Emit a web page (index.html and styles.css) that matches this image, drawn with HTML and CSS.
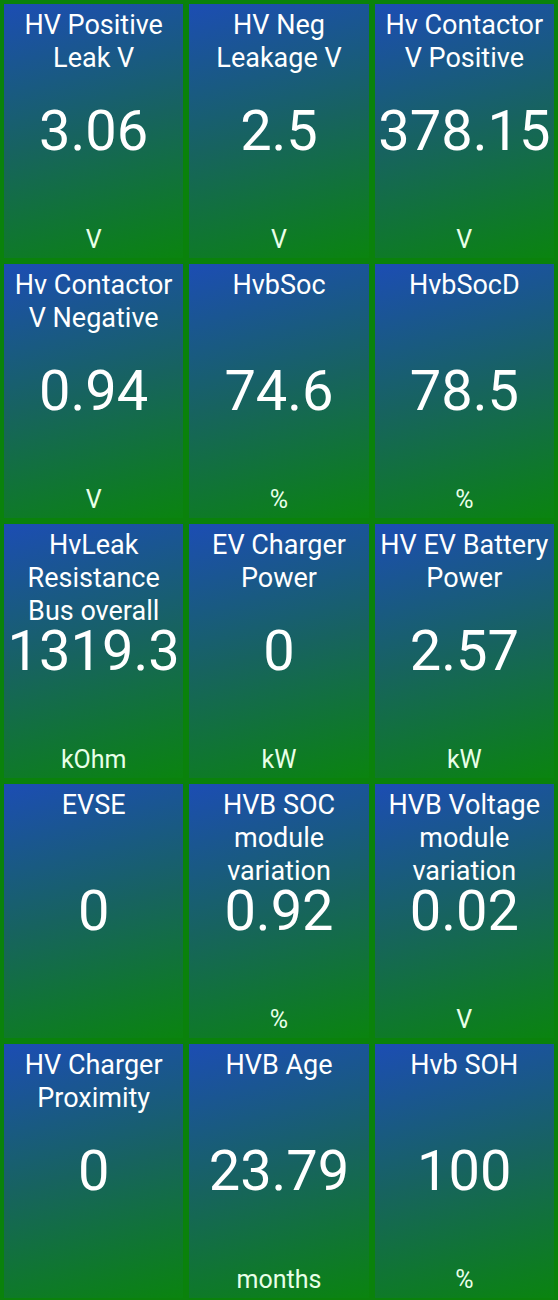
FILE: index.html
```html
<!DOCTYPE html>
<html>
<head>
<meta charset="utf-8">
<link rel="stylesheet" href="styles.css">
</head>
<body>
<div class="grid">
  <div class="tile"><div class="title">HV Positive Leak V</div><div class="value">3.06</div><div class="unit">V</div></div>
  <div class="tile"><div class="title">HV Neg Leakage V</div><div class="value">2.5</div><div class="unit">V</div></div>
  <div class="tile"><div class="title">Hv Contactor V Positive</div><div class="value">378.15</div><div class="unit">V</div></div>
  <div class="tile"><div class="title">Hv Contactor V Negative</div><div class="value">0.94</div><div class="unit">V</div></div>
  <div class="tile"><div class="title">HvbSoc</div><div class="value">74.6</div><div class="unit">%</div></div>
  <div class="tile"><div class="title">HvbSocD</div><div class="value">78.5</div><div class="unit">%</div></div>
  <div class="tile"><div class="title">HvLeak Resistance Bus overall</div><div class="value">1319.3</div><div class="unit">kOhm</div></div>
  <div class="tile"><div class="title">EV Charger Power</div><div class="value">0</div><div class="unit">kW</div></div>
  <div class="tile"><div class="title">HV EV Battery Power</div><div class="value">2.57</div><div class="unit">kW</div></div>
  <div class="tile"><div class="title">EVSE</div><div class="value">0</div><div class="unit"></div></div>
  <div class="tile"><div class="title">HVB SOC module variation</div><div class="value">0.92</div><div class="unit">%</div></div>
  <div class="tile"><div class="title">HVB Voltage module variation</div><div class="value">0.02</div><div class="unit">V</div></div>
  <div class="tile"><div class="title">HV Charger Proximity</div><div class="value">0</div><div class="unit"></div></div>
  <div class="tile"><div class="title">HVB Age</div><div class="value">23.79</div><div class="unit">months</div></div>
  <div class="tile"><div class="title">Hvb SOH</div><div class="value">100</div><div class="unit">%</div></div>
</div>
</body>
</html>
```
FILE: styles.css
```css
html, body {
  margin: 0;
  padding: 0;
  background: #0a820b;
}
body {
  font-family: Roboto, "Noto Sans", sans-serif;
  color: #fff;
  width: 558px;
  height: 1300px;
  overflow: hidden;
}
.grid {
  display: grid;
  grid-template-columns: repeat(3, 1fr);
  grid-auto-rows: 254px;
  gap: 6px;
  padding: 4px 4px 4px 4px;
}
.tile {
  display: grid;
  grid-template-rows: 1fr;
  grid-template-columns: 1fr;
  background: linear-gradient(165deg, #1c4db4 0%, #17635f 50%, #0a840f 100%);
  text-align: center;
  overflow: hidden;
}
.tile > div {
  grid-area: 1 / 1;
}
.title {
  align-self: start;
  font-size: 27px;
  line-height: 33px;
  padding: 5px 2px 0;
}
.value {
  align-self: center;
  font-size: 56px;
  line-height: 64px;
  white-space: nowrap;
  margin-left: -6px;
  margin-right: -6px;
}
.unit {
  align-self: end;
  font-size: 25px;
  line-height: 30px;
  padding-bottom: 3px;
  color: #e8ffe8;
}
```
